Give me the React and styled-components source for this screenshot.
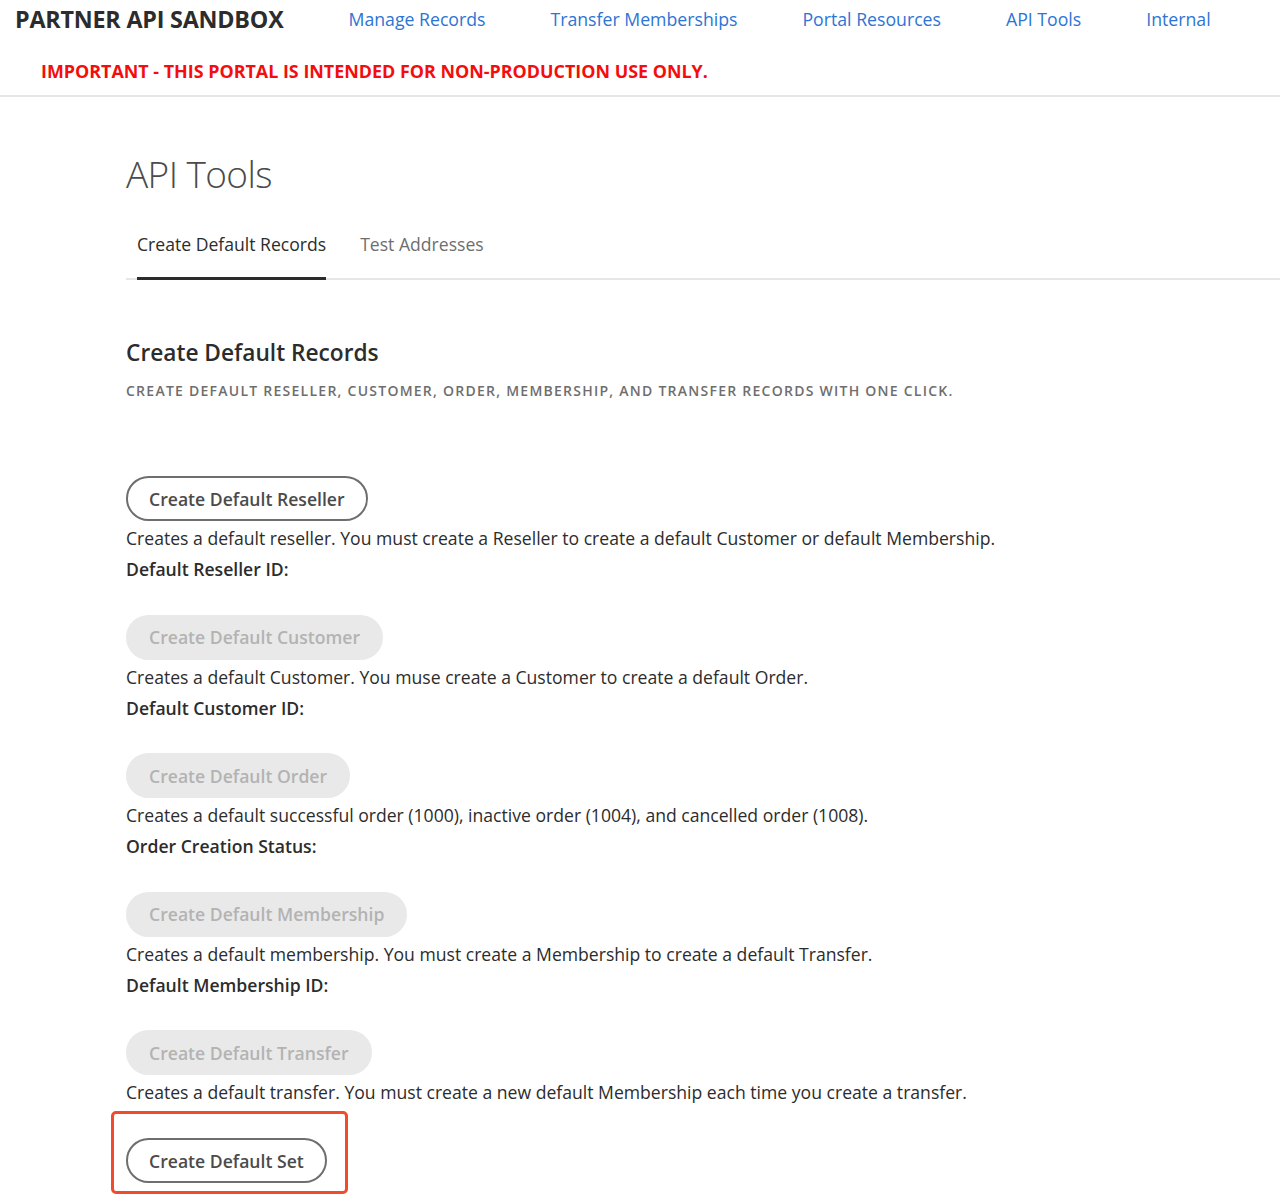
import React from 'react';
import styled, { createGlobalStyle } from 'styled-components';

const GlobalStyle = createGlobalStyle`
  body {
    margin: 0;
    background: #ffffff;
    font-family: "Open Sans", Lato, sans-serif;
    color: #2c2c2c;
  }
`;

const Header = styled.header`
  border-bottom: 2px solid #e6e6e6;
  padding: 0 0 12px 15px;
`;

const TopRow = styled.div`
  display: flex;
  align-items: center;
  gap: 65px;
  height: 38px;
`;

const Brand = styled.div`
  font-size: 23.3px;
  font-weight: 700;
  color: #2c2c2c;
  letter-spacing: -0.2px;
`;

const NavLink = styled.a`
  font-size: 17.7px;
  color: #2d74d4;
  text-decoration: none;
  cursor: pointer;
`;

const Warning = styled.div`
  margin: 21px 0 0 26px;
  font-size: 17.9px;
  font-weight: 700;
  color: #f50d0d;
  line-height: 24px;
`;

const Main = styled.main`
  padding-left: 126px;
`;

const Title = styled.h1`
  margin: 50px 0 0;
  font-size: 37px;
  font-weight: 300;
  letter-spacing: -0.6px;
  color: #4b4b4b;
  line-height: 54px;
`;

const TabBar = styled.div`
  display: flex;
  gap: 34px;
  margin-top: 27px;
  border-bottom: 2px solid #e6e6e6;
`;

const Tab = styled.div`
  margin-left: ${(p) => (p.$first ? '11px' : '0')};
  padding: 4px 0 21px;
  font-size: 17.6px;
  color: ${(p) => (p.$active ? '#2c2c2c' : '#6e6e6e')};
  border-bottom: 3px solid ${(p) => (p.$active ? '#2c2c2c' : 'transparent')};
  margin-bottom: -2px;
  line-height: 24px;
`;

const SectionTitle = styled.h2`
  margin: 57px 0 0;
  font-size: 22.7px;
  font-weight: 600;
  color: #2c2c2c;
  line-height: 32px;
`;

const Subtitle = styled.p`
  margin: 12px 0 0;
  font-size: 14px;
  font-weight: 600;
  letter-spacing: 1.25px;
  text-transform: uppercase;
  color: #6e6e6e;
  line-height: 20px;
`;

const Groups = styled.div`
  margin-top: 75px;
  display: flex;
  flex-direction: column;
`;

const Group = styled.div`
  flex: none;
  height: ${(p) => (p.$last ? 'auto' : '138.5px')};
`;

const PillButton = styled.button`
  display: block;
  box-sizing: border-box;
  height: 45px;
  padding: 0 21px;
  border-radius: 23px;
  font-family: inherit;
  font-size: 17.6px;
  font-weight: 600;
  border: 2px solid ${(p) => (p.disabled ? '#e9e9e9' : '#6e6e6e')};
  background: ${(p) => (p.disabled ? '#e9e9e9' : '#ffffff')};
  color: ${(p) => (p.disabled ? '#b3b3b3' : '#4b4b4b')};
  cursor: ${(p) => (p.disabled ? 'default' : 'pointer')};
`;

const Description = styled.div`
  padding-top: 2px;
  font-size: 17.6px;
  line-height: 31px;
  color: #2c2c2c;
`;

const Label = styled.div`
  font-size: 17.6px;
  font-weight: 600;
  line-height: 31px;
  color: #2c2c2c;
`;

const Highlight = styled.div`
  display: inline-block;
  margin: 3px 0 0 -15px;
  padding: 24px 18px 8px 12px;
  border: 3px solid #f24a2c;
  border-radius: 5px;
`;

const records = [
  {
    button: 'Create Default Reseller',
    text: 'Creates a default reseller. You must create a Reseller to create a default Customer or default Membership.',
    label: 'Default Reseller ID:',
  },
  {
    button: 'Create Default Customer',
    text: 'Creates a default Customer. You muse create a Customer to create a default Order.',
    label: 'Default Customer ID:',
    disabled: true,
  },
  {
    button: 'Create Default Order',
    text: 'Creates a default successful order (1000), inactive order (1004), and cancelled order (1008).',
    label: 'Order Creation Status:',
    disabled: true,
  },
  {
    button: 'Create Default Membership',
    text: 'Creates a default membership. You must create a Membership to create a default Transfer.',
    label: 'Default Membership ID:',
    disabled: true,
  },
  {
    button: 'Create Default Transfer',
    text: 'Creates a default transfer. You must create a new default Membership each time you create a transfer.',
    disabled: true,
  },
];

const navItems = ['Manage Records', 'Transfer Memberships', 'Portal Resources', 'API Tools', 'Internal'];

export default function App() {
  return (
    <>
      <GlobalStyle />
      <Header>
        <TopRow>
          <Brand>PARTNER API SANDBOX</Brand>
          {navItems.map((item) => (
            <NavLink key={item}>{item}</NavLink>
          ))}
        </TopRow>
        <Warning>IMPORTANT - THIS PORTAL IS INTENDED FOR NON-PRODUCTION USE ONLY.</Warning>
      </Header>
      <Main>
        <Title>API Tools</Title>
        <TabBar>
          <Tab $first $active>Create Default Records</Tab>
          <Tab>Test Addresses</Tab>
        </TabBar>
        <SectionTitle>Create Default Records</SectionTitle>
        <Subtitle>Create default reseller, customer, order, membership, and transfer records with one click.</Subtitle>
        <Groups>
          {records.map((r, i) => (
            <Group key={r.button} $last={i === records.length - 1}>
              <PillButton disabled={r.disabled}>{r.button}</PillButton>
              <Description>{r.text}</Description>
              {r.label && <Label>{r.label}</Label>}
            </Group>
          ))}
          <div>
            <Highlight>
              <PillButton>Create Default Set</PillButton>
            </Highlight>
          </div>
        </Groups>
      </Main>
    </>
  );
}
